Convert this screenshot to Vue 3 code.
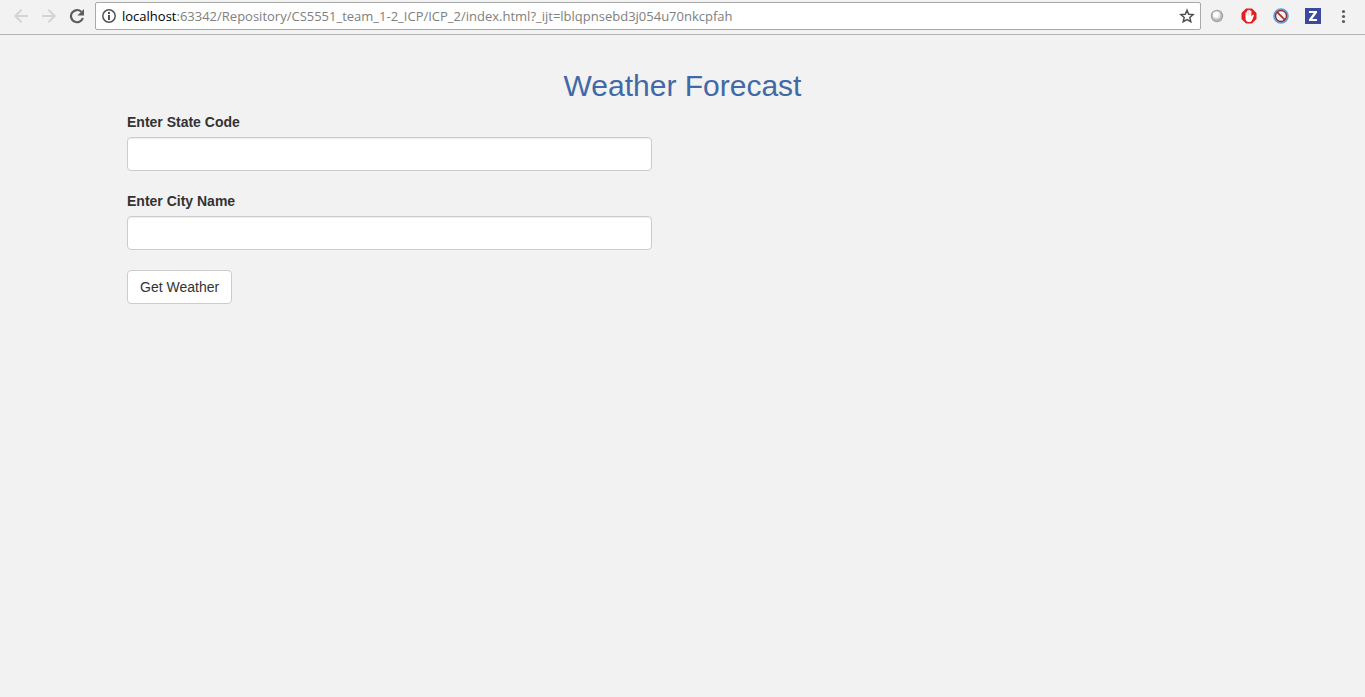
<script setup>
import { ref } from 'vue'

const host = 'localhost'
const path = ref(':63342/Repository/CS5551_team_1-2_ICP/ICP_2/index.html?_ijt=lblqpnsebd3j054u70nkcpfah')
const stateCode = ref('')
const cityName = ref('')
</script>

<template>
  <div class="window">
    <header class="toolbar">
      <div class="nav">
        <button class="tool" type="button" aria-label="Back" disabled>
          <svg viewBox="0 0 16 16"><path d="M15 8H2.5M8.6 1.7 2.3 8l6.3 6.3" fill="none" stroke="#d3d4d5" stroke-width="2" /></svg>
        </button>
        <button class="tool" type="button" aria-label="Forward" disabled>
          <svg viewBox="0 0 16 16"><path d="M1 8h12.5M7.4 1.7 13.7 8l-6.3 6.3" fill="none" stroke="#d3d4d5" stroke-width="2" /></svg>
        </button>
        <button class="tool" type="button" aria-label="Reload">
          <svg viewBox="0 0 16 16">
            <path d="M13.9 10A6.1 6.1 0 1 1 12.3 3.7" fill="none" stroke="#5a5d61" stroke-width="2.2" />
            <path d="M15 1v6.6H8.4z" fill="#5a5d61" />
          </svg>
        </button>
      </div>

      <div class="address">
        <button class="tool info" type="button" aria-label="Site information">
          <svg viewBox="0 0 16 16">
            <circle cx="8" cy="8" r="6.2" fill="none" stroke="#505357" stroke-width="1.5" />
            <path d="M7 7h2v5H7zM7 4h2v2H7z" fill="#505357" />
          </svg>
        </button>
        <label class="host" for="url">{{ host }}</label>
        <input id="url" v-model="path" class="url" type="text" spellcheck="false" />
        <button class="tool" type="button" aria-label="Bookmark this page">
          <svg viewBox="0 0 16 16">
            <path d="m8 2.2 1.7 4 4.4.4-3.3 2.9 1 4.2L8 11.5l-3.8 2.2 1-4.2-3.3-2.9 4.4-.4z" fill="none" stroke="#4d5054" stroke-width="1.5" />
          </svg>
        </button>
      </div>

      <div class="extensions">
        <button class="tool" type="button" aria-label="Status extension">
          <svg viewBox="0 0 16 16">
            <circle cx="8" cy="8" r="6.2" fill="#a3a3a3" />
            <circle cx="8" cy="8" r="5" fill="#bcbcbc" />
            <circle cx="7.5" cy="7" r="3.8" fill="#ededed" />
            <circle cx="7" cy="6.5" r="2.5" fill="#fff" />
          </svg>
        </button>
        <button class="tool" type="button" aria-label="Ad blocker">
          <svg viewBox="0 0 16 16">
            <path d="M5 .5h6L15.500 5v6L11 15.500H5L.5 11V5z" fill="#e02020" />
            <path d="M4.500 10V5c0-1 1.300-1 1.300 0V3.200c0-1 1.500-1 1.500 0v-.7c0-1 1.600-1 1.600 0v.7c0-1 1.500-1 1.500 0V8.500l1-1.300c.7-.8 1.900-.3 1.500.6L11.200 12c-.6 1.400-1.400 2-3.200 2-2.500 0-3.500-1.500-3.500-4z" fill="#fff" />
            <path d="M5.800 4.500v3M7.300 3.500v4M8.900 3.500v4" stroke="#efa5a5" stroke-width=".5" />
          </svg>
        </button>
        <button class="tool" type="button" aria-label="Content blocker">
          <svg viewBox="0 0 16 16">
            <circle cx="8" cy="8" r="7" fill="#fff" stroke="#55a2e2" stroke-width="1.6" />
            <circle cx="8" cy="8" r="5.5" fill="#f6f3f1" stroke="#8f292d" stroke-width="1.4" />
            <path d="m4.2 4.2 7.6 7.6" stroke="#a52d30" stroke-width="1.7" />
          </svg>
        </button>
        <button class="tool" type="button" aria-label="Z extension">
          <svg viewBox="0 0 16 16">
            <path d="M0 0h16v16H0z" fill="#3b4a9f" />
            <path d="M4 4h8M4 12h8" stroke="#fff" stroke-width="2" />
            <path d="M10.600 4.500 5.400 11.500" stroke="#fff" stroke-width="2.4" />
          </svg>
        </button>
        <button class="tool" type="button" aria-label="Menu">
          <svg viewBox="0 0 16 16" fill="#5a5d61">
            <circle cx="6.5" cy="3.5" r="1.6" /><circle cx="6.5" cy="8.5" r="1.6" /><circle cx="6.5" cy="13.5" r="1.6" />
          </svg>
        </button>
      </div>
    </header>

    <main class="container">
      <h2>Weather Forecast</h2>
      <form class="form" @submit.prevent>
        <div class="field">
          <label for="state">Enter State Code</label>
          <input id="state" v-model="stateCode" type="text" />
        </div>
        <div class="field">
          <label for="city">Enter City Name</label>
          <input id="city" v-model="cityName" type="text" />
        </div>
        <button class="submit" type="submit">Get Weather</button>
      </form>
    </main>
  </div>
</template>

<style>
body {
  margin: 0;
  background: #f2f2f2;
}
</style>

<style scoped>
.window,
.window * {
  box-sizing: border-box;
}

.window {
  min-height: 100vh;
  background: #f2f2f2;
  color: #333;
  font: 14px/20px "Liberation Sans", Arial, sans-serif;
}

.toolbar {
  display: flex;
  align-items: flex-start;
  height: 35px;
  padding: 2px 12px 0 13px;
  border-bottom: 1px solid #b4b6b5;
  background: #f2f2f2;
}

.nav,
.extensions {
  display: flex;
  align-items: center;
  height: 28px;
}

.nav {
  gap: 12px;
  margin-right: 10px;
}

.extensions {
  gap: 16px;
  margin-left: 8px;
}

.tool {
  flex: none;
  width: 16px;
  height: 16px;
  padding: 0;
  border: 0;
  background: none;
}

.tool svg {
  display: block;
  width: 16px;
  height: 16px;
}

.address {
  display: flex;
  flex: 1;
  align-items: center;
  min-width: 0;
  height: 28px;
  padding: 0 5px;
  border: 1px solid #a8aaa9;
  border-radius: 2px;
  background: #fff;
  font: 13px/20px "Open Sans", "Noto Sans", sans-serif;
}

.info {
  margin-right: 5px;
}

.host {
  color: #000;
}

.url {
  flex: 1;
  min-width: 0;
  height: 20px;
  padding: 0;
  border: 0;
  outline: 0;
  background: transparent;
  color: #808080;
  font: inherit;
}

.container {
  max-width: 1171px;
  margin: 0 auto;
  padding: 34px 30px 0;
}

h2 {
  margin: 0 0 10px;
  color: #4169a5;
  font-size: 30px;
  font-weight: 400;
  line-height: 33px;
  text-align: center;
}

.form {
  width: calc(50% - 31px);
  min-width: 260px;
}

.field {
  margin-bottom: 20px;
}

.field label {
  display: block;
  margin-bottom: 5px;
  font-weight: 700;
}

.field input {
  display: block;
  width: 100%;
  height: 34px;
  padding: 6px 12px;
  border: 1px solid #ccc;
  border-radius: 4px;
  background: #fff;
  box-shadow: inset 0 1px 1px rgba(0, 0, 0, 0.075);
  color: #555;
  font: inherit;
}

.submit {
  height: 34px;
  padding: 6px 12px;
  border: 1px solid #ccc;
  border-radius: 4px;
  background: #fff;
  color: #333;
  font: inherit;
}
</style>
